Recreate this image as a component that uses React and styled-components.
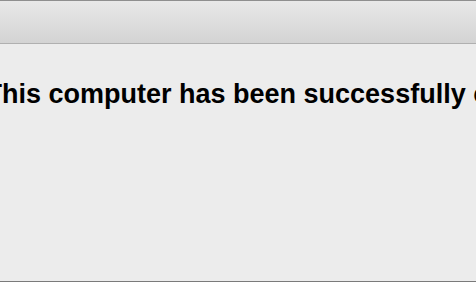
import React from "react";
import styled, { createGlobalStyle } from "styled-components";

const Global = createGlobalStyle`
  html, body { margin: 0; padding: 0; background: #ececec; }
  body { font-family: "Liberation Sans", Arial, sans-serif; }
`;

const Window = styled.div`
  width: 476px;
  height: 282px;
  box-sizing: border-box;
  border-top: 1px solid #8f8f8f;
  border-bottom: 1px solid #7a7a7a;
  background: #ececec;
  display: flex;
  flex-direction: column;
  overflow: hidden;
`;

const Toolbar = styled.div`
  height: 42px;
  flex: none;
  background: linear-gradient(to bottom, #e8e8e8 0%, #d3d3d3 100%);
  border-bottom: 1px solid #b0b0b0;
`;

const Content = styled.div`
  flex: 1;
  padding-top: 34px;
  overflow: hidden;
`;

const Heading = styled.h1`
  margin: 0 0 0 -14.5px;
  font-size: 27px;
  line-height: 32px;
  font-weight: 700;
  color: #000;
  white-space: nowrap;
`;

export default function App() {
  return (
    <>
      <Global />
      <Window>
        <Toolbar />
        <Content>
          <Heading>This computer has been successfully configured.</Heading>
        </Content>
      </Window>
    </>
  );
}
